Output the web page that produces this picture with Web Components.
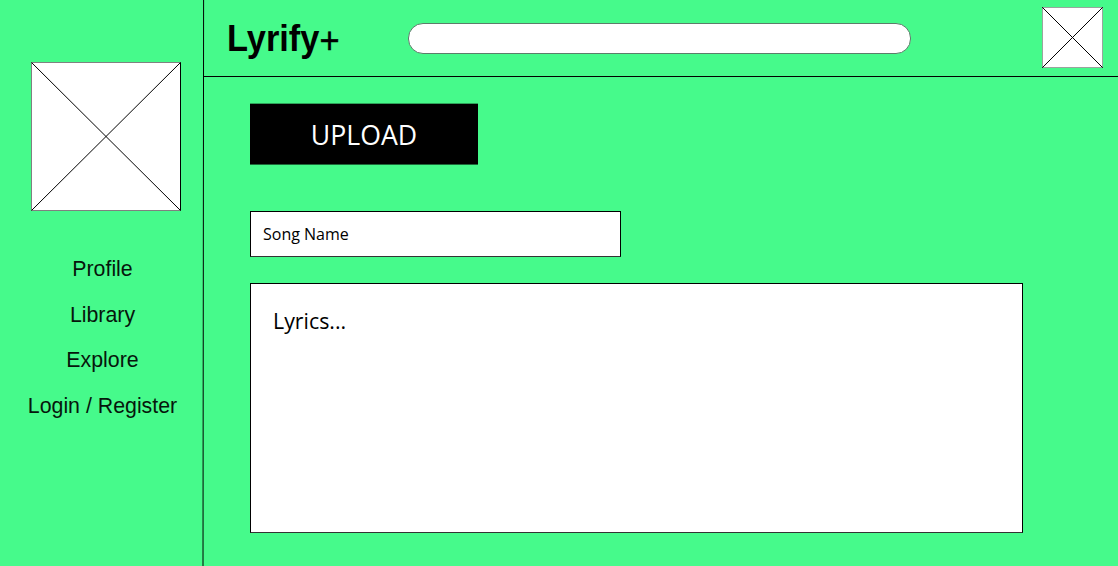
<!DOCTYPE html>
<html lang="en">
<head>
<meta charset="utf-8">
<title>Lyrify+</title>
<style>
html, body { margin: 0; height: 100%; overflow: hidden; background: #46fa8b; }
</style>
</head>
<body>
<lyrify-app></lyrify-app>
<script>
function define(name, html) {
  const template = document.createElement('template');
  template.innerHTML = html;
  customElements.define(name, class extends HTMLElement {
    constructor() {
      super();
      this.attachShadow({ mode: 'open' }).appendChild(template.content.cloneNode(true));
    }
  });
}

define('image-placeholder', `
<style>
:host { display: block; }
svg { display: block; width: 100%; height: 100%; }
rect { fill: #fff; stroke: #808080; }
path { fill: none; stroke: #000; stroke-width: 1; vector-effect: non-scaling-stroke; }
rect { vector-effect: non-scaling-stroke; }
.edge { visibility: var(--edge, hidden); }
</style>
<svg viewBox="0 0 150 150" preserveAspectRatio="none">
  <rect x=".5" y=".5" width="149" height="149"/>
  <path d="M.5 .5L149.5 149.5M149.5 .5L.5 149.5"/>
  <path class="edge" d="M149.5 .5V149.5"/>
</svg>`);

define('nav-item', `
<style>
:host { display: block; height: 45.5px; line-height: 45.5px; font-family: "Liberation Sans", Arial, sans-serif; font-size: 21.33px; color: #06160c; text-align: center; white-space: nowrap; }
</style><slot></slot>`);

define('side-bar', `
<style>
:host { display: flex; flex-direction: column; width: 205px; flex: none; box-sizing: border-box; padding-top: 62px; }
image-placeholder { width: 150px; height: 149px; margin-left: 31px; --edge: visible; }
nav { margin-top: 36px; }
</style>
<image-placeholder></image-placeholder>
<nav>
  <nav-item>Profile</nav-item>
  <nav-item>Library</nav-item>
  <nav-item>Explore</nav-item>
  <nav-item>Login / Register</nav-item>
</nav>`);

define('brand-logo', `
<style>
:host { display: block; width: 112px; height: 40px; }
span { display: block; font: bold 37px/40px "Liberation Sans", Arial, sans-serif; color: #000; white-space: nowrap; transform: scaleX(.93); transform-origin: 0 0; }
</style><span><slot></slot></span>`);

define('search-bar', `
<style>
:host { display: block; box-sizing: border-box; width: 503px; height: 31px; background: #fff; border: 1.5px solid #5c7d6a; border-radius: 15px; }
</style>`);

define('top-bar', `
<style>
:host { display: flex; align-items: flex-start; box-sizing: border-box; height: 77px; border-bottom: 1px solid #000; margin-left: -1px; }
brand-logo { margin: 19px 0 0 23px; }
brand-logo b { display: inline-block; font-weight: 400; -webkit-text-stroke: .5px #000; transform: translateY(2px); }
search-bar { margin: 23px 0 0 69px; }
image-placeholder { width: 61px; height: 61px; margin: 7px 15px 0 auto; }
</style>
<brand-logo>Lyrify<b>+</b></brand-logo>
<search-bar></search-bar>
<image-placeholder></image-placeholder>`);

define('upload-button', `
<style>
:host { display: block; box-sizing: border-box; width: 228px; height: 62px; background: #000; border-top: 1px solid #2ea35a; border-bottom: 1px solid #1e6b3b; background-clip: padding-box; color: #fff; font: 26.67px/61px "Open Sans", "Noto Sans", sans-serif; text-align: center; }
</style><slot></slot>`);

define('text-box', `
<style>
:host { display: block; box-sizing: border-box; background: #fff; border: 1px solid #000; border-bottom-color: #333; color: #000; font-family: "Open Sans", "Noto Sans", sans-serif; }
</style><slot></slot>`);

define('upload-form', `
<style>
:host { display: flex; flex-direction: column; padding: 26px 0 0 45px; }
.name { width: 371px; height: 46px; margin-top: 46px; padding-left: 12px; font-size: 16px; line-height: 44px; }
.lyrics { width: 773px; height: 250px; margin-top: 26px; padding: 22px; font-size: 21.33px; line-height: 29px; }
</style>
<upload-button>UPLOAD</upload-button>
<text-box class="name">Song Name</text-box>
<text-box class="lyrics">Lyrics...</text-box>`);

define('lyrify-app', `
<style>
:host { display: flex; width: 1118px; height: 566px; position: relative; overflow: hidden; background: #46fa8b; }
main { flex: 1; min-width: 0; }
.divider { position: absolute; left: 200px; top: 0; }
</style>
<side-bar></side-bar>
<main><top-bar></top-bar><upload-form></upload-form></main>
<svg class="divider" width="8" height="566"><path d="M3.6 0L3 566" stroke="#000"/></svg>`);
</script>
</body>
</html>
